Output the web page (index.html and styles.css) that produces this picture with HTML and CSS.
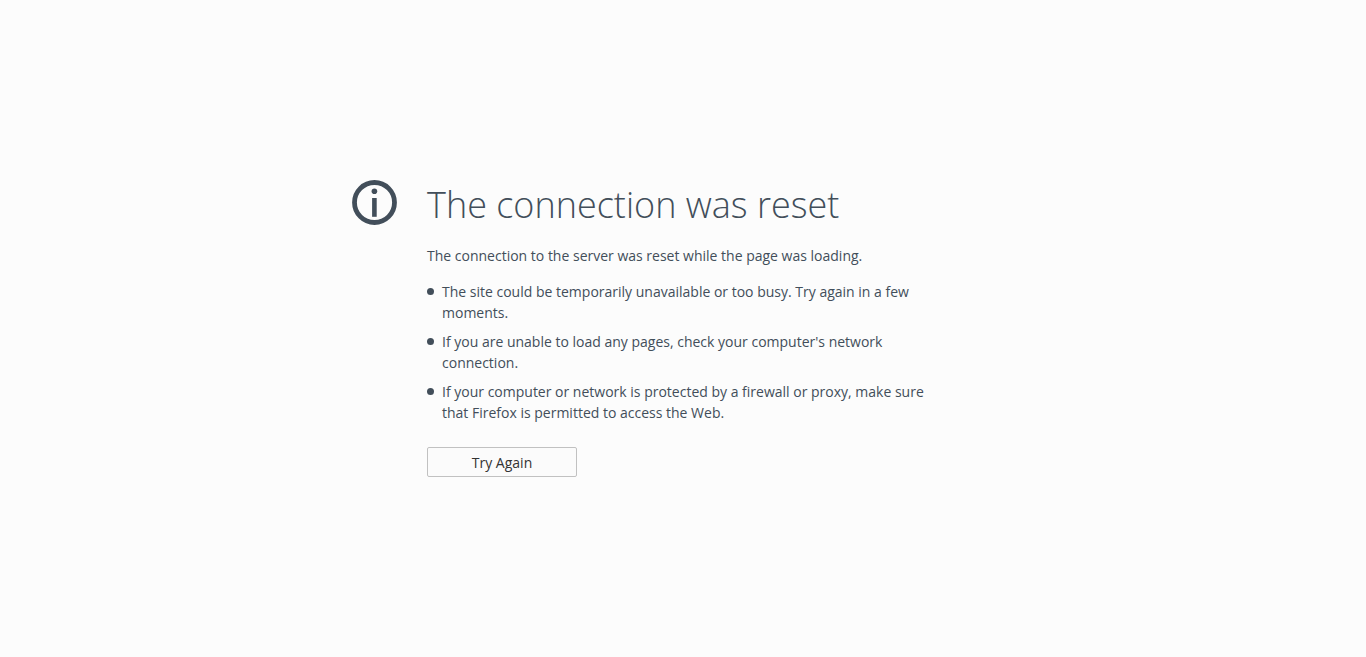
FILE: index.html
```html
<!DOCTYPE html>
<html lang="en">
<head>
<meta charset="utf-8">
<meta name="viewport" content="width=device-width, initial-scale=1">
<title>Problem loading page</title>
<link rel="stylesheet" href="styles.css">
</head>
<body>
<main class="error-page">
  <svg class="info-icon" viewBox="0 0 45 45" aria-hidden="true">
    <circle cx="22.5" cy="22.5" r="20" fill="none" stroke="currentColor" stroke-width="4.8"/>
    <circle cx="22.4" cy="11.2" r="2.8" fill="currentColor"/>
    <rect x="20.1" y="18" width="4.6" height="18.8" fill="currentColor"/>
  </svg>
  <div class="error-body">
    <h1 class="error-title">The connection was reset</h1>
    <p class="error-summary">The connection to the server was reset while the page was loading.</p>
    <ul class="error-tips">
      <li class="error-tip">The site could be temporarily unavailable or too busy. Try again in a few moments.</li>
      <li class="error-tip">If you are unable to load any pages, check your computer's network connection.</li>
      <li class="error-tip">If your computer or network is protected by a firewall or proxy, make sure that Firefox is permitted to access the Web.</li>
    </ul>
    <button class="retry-button" type="button">Try Again</button>
  </div>
</main>
</body>
</html>
```
FILE: styles.css
```css
* {
  box-sizing: border-box;
}

body {
  display: flex;
  align-items: center;
  justify-content: center;
  min-height: 100vh;
  margin: 0;
  padding: 0 48px;
  background: #fcfcfc;
  color: #424e5a;
  font-family: "Segoe UI", "Open Sans", "Noto Sans", sans-serif;
  font-size: 14px;
  line-height: 21px;
}

.error-page {
  display: flex;
  align-items: flex-start;
  gap: 30px;
  width: 100%;
  max-width: 662px;
}

.info-icon {
  flex: none;
  width: 45px;
  height: 45px;
}

.error-body {
  max-width: 512px;
}

.error-title {
  margin: 0 0 16px;
  font-size: 36px;
  font-weight: 300;
  line-height: 49px;
}

.error-summary {
  margin: 0;
}

.error-tips {
  display: grid;
  gap: 8px;
  margin: 15px 0 24px;
  padding: 0;
  list-style: none;
}

.error-tip {
  display: grid;
  grid-template-columns: 7px 1fr;
  gap: 8px;
}

.error-tip::before {
  content: "";
  width: 7px;
  height: 7px;
  margin-top: 7px;
  border-radius: 50%;
  background: currentColor;
}

.retry-button {
  display: block;
  min-width: 150px;
  height: 30px;
  padding: 0 16px;
  border: 1px solid #c1c1c1;
  border-radius: 2px;
  background: #fbfbfb;
  color: #333;
  font: inherit;
  cursor: pointer;
}
```
